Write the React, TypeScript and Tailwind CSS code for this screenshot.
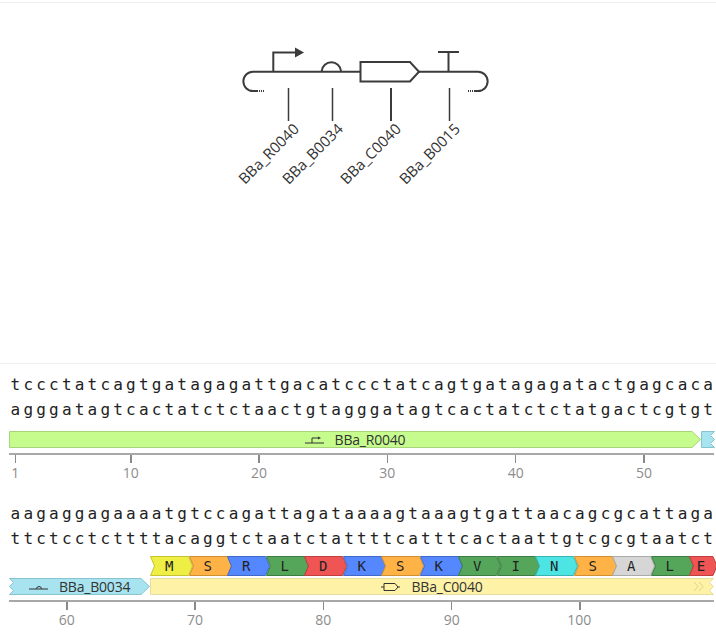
import React from "react";

const uiFont = "font-['Open_Sans',sans-serif]";

const aminoColors: Record<string, string> = {
  M: "#eeee44",
  S: "#ffb347",
  R: "#5588ff",
  L: "#55a65a",
  D: "#f05555",
  K: "#5588ff",
  V: "#55a65a",
  I: "#55a65a",
  N: "#4de4e4",
  A: "#d6d6d6",
  E: "#f05555",
};

const aminoBorders: Record<string, string> = {
  M: "#c4c430",
  S: "#d09030",
  R: "#4068c8",
  L: "#3d7d42",
  D: "#c04040",
  K: "#4068c8",
  V: "#3d7d42",
  I: "#3d7d42",
  N: "#38b4b4",
  A: "#aaaaaa",
  E: "#c04040",
};

function SeqLine({ text }: { text: string }) {
  return (
    <div className="flex h-[25px] items-center pl-[9px] font-['DejaVu_Sans_Mono',monospace] text-[16px] text-[#222]">
      {text.split("").map((c, i) => (
        <span key={i} className="w-[12.83px] shrink-0 text-center">
          {c}
        </span>
      ))}
    </div>
  );
}

function Tick({ label, wide }: { label: string; wide?: boolean }) {
  return (
    <div className={wide ? "w-[128.3px] shrink-0" : "w-[115.5px] shrink-0"}>
      <div className="h-2 w-[1.5px] bg-[#8a8a8a]" />
      <div className={label === "100" ? "flex w-[1.5px] justify-center pr-[5px] pt-[1px] text-[14px] leading-[18px] text-[#8c8c8c]" : "flex w-[1.5px] justify-center pt-[1px] text-[14px] leading-[18px] text-[#8c8c8c]"}>
        <span>{label}</span>
      </div>
    </div>
  );
}

function Axis({ first, labels }: { first: number; labels: string[] }) {
  return (
    <div className="mx-[9px] w-[705px] overflow-visible border-t-2 border-[#a8a8a8]" style={{ paddingLeft: first }}>
      <div className="flex">
        {labels.map((l, i) => (
          <Tick key={l} label={l} wide={first !== 5.5 || i > 0} />
        ))}
      </div>
    </div>
  );
}

function Amino({ letter, width = 38.5 }: { letter: string; width?: number }) {
  return (
    <div className="relative h-5 shrink-0" style={{ width }}>
      <svg className="absolute left-0 top-0 overflow-visible" width={width + 4} height="20">
        <polygon
          points={`0.5,0.5 ${width},0.5 ${width + 4},10 ${width},19.5 0.5,19.5 4.5,10`}
          fill={aminoColors[letter]}
          stroke={aminoBorders[letter]}
          strokeWidth="1"
        />
      </svg>
      <span className="absolute inset-0 flex items-center justify-center font-['DejaVu_Sans_Mono',monospace] text-[14px] text-[#222]">
        {letter}
      </span>
    </div>
  );
}

function PromoterGlyph() {
  return (
    <svg width="20" height="8" className="shrink-0">
      <path d="M0 7H19M7 7V2H14" fill="none" stroke="#333" strokeWidth="1" />
      <path d="M13 0.5L16 2L13 3.5Z" fill="#333" />
    </svg>
  );
}

function RbsGlyph() {
  return (
    <svg width="20" height="8" className="shrink-0">
      <path d="M0 6H19" stroke="#333" strokeWidth="1" />
      <path d="M7.5 6A2.5 2.5 0 0 1 12.5 6" fill="none" stroke="#333" strokeWidth="1" />
    </svg>
  );
}

function CdsGlyph() {
  return (
    <svg width="20" height="10" className="shrink-0">
      <path d="M0 5H3M16 5H19" stroke="#333" strokeWidth="1" />
      <path d="M3 1.5H14L17 5L14 8.5H3Z" fill="none" stroke="#333" strokeWidth="1" />
    </svg>
  );
}

function CircuitDiagram() {
  const labels = [
    { x: 300, y: 130, t: "BBa_R0040" },
    { x: 344, y: 130, t: "BBa_B0034" },
    { x: 402, y: 130, t: "BBa_C0040" },
    { x: 461, y: 130, t: "BBa_B0015" },
  ];
  return (
    <svg width="716" height="200" className="block">
      <g transform="translate(0 -3)">
        <g fill="none" stroke="#3b3b3b" strokeWidth="2">
          <path d="M263 71.7H253A9.65 9.65 0 0 0 253 91H257" />
          <path d="M257 91H264" strokeDasharray="1 1" />
          <path d="M263 71.7H360" />
          <path d="M273.3 71.7V52.5H296" />
          <path d="M321.7 71A9.7 9.7 0 0 1 341 71" />
          <path d="M360.5 62H410L419 71.7L410 81.5H360.5Z" />
          <path d="M419 71.7H478A9.65 9.65 0 0 1 478 91H474" />
          <path d="M468 91H474" strokeDasharray="1 1" />
          <path d="M448.5 71.7V52" />
          <path d="M438 52H459" />
          <path d="M288.5 88V121" strokeWidth="1.5" />
          <path d="M332.5 88V121" strokeWidth="1.5" />
          <path d="M391 88V121" />
          <path d="M449.5 88V121" strokeWidth="1.5" />
        </g>
        <path d="M295 47.5L304 52.5L295 57.5Z" fill="#3b3b3b" />
        {labels.map((l) => (
          <text
            key={l.t}
            x={l.x}
            y={l.y}
            textAnchor="end"
            transform={`rotate(-45 ${l.x} ${l.y})`}
            className={`${uiFont} text-[15px]`}
            fill="#333"
          >
            {l.t}
          </text>
        ))}
      </g>
    </svg>
  );
}

export default function App() {
  return (
    <div className={`h-[637px] w-[716px] overflow-hidden bg-white ${uiFont}`}>
      {/* Circuit map */}
      <div className="mt-[2px] h-[362px] border-y border-[#eceef2]">
        <CircuitDiagram />
      </div>

      {/* First sequence block */}
      <div className="pt-[8px]">
        <SeqLine text="tccctatcagtgatagagattgacatccctatcagtgatagagatactgagcaca" />
        <SeqLine text="agggatagtcactatctctaactgtagggatagtcactatctctatgactcgtgt" />
        <div className="mt-[9px] flex h-[17px] pl-[9px]">
          <div className="relative h-[17px] w-[692px] shrink-0">
            <svg className="absolute inset-0" width="692" height="17">
              <polygon points="0.5,0.5 683,0.5 691.5,8.5 683,16.5 0.5,16.5" fill="#c6fb8e" stroke="#a8d47a" />
            </svg>
            <div className="absolute inset-0 flex items-center justify-center gap-[10px] text-[14px] tracking-[-0.2px] text-[#333]">
              <PromoterGlyph />
              <span>BBa_R0040</span>
            </div>
          </div>
          <svg width="14" height="17" className="shrink-0">
            <polygon points="0.5,0.5 13.5,0.5 9.5,4.5 13.5,8.5 9.5,12.5 13.5,16.5 0.5,16.5" fill="#a8e4ef" stroke="#88c4d0" />
          </svg>
        </div>
        <div className="mt-[5px]">
          <Axis first={5.5} labels={["1", "10", "20", "30", "40", "50"]} />
        </div>
      </div>

      {/* Second sequence block */}
      <div className="pt-[19px]">
        <SeqLine text="aagaggagaaaatgtccagattagataaaagtaaagtgattaacagcgcattaga" />
        <SeqLine text="ttctcctcttttacaggtctaatctattttcatttcactaattgtcgcgtaatct" />
        <div className="mt-[5px] flex h-5 overflow-hidden pl-[150px]">
          {"MSRLDKSKVINSAL".split("").map((a, i) => (
            <Amino key={i} letter={a} />
          ))}
          <Amino letter="E" width={24} />
        </div>
        <div className="mt-[2px] flex h-[17px] pl-[9px]">
          <div className="relative h-[17px] w-[141px] shrink-0">
            <svg className="absolute inset-0" width="141" height="17">
              <polygon points="0.5,0.5 132,0.5 140.5,8.5 132,16.5 0.5,16.5 4.5,12.5 0.5,8.5 4.5,4.5" fill="#a8e4ef" stroke="#88c4d0" />
            </svg>
            <div className="absolute inset-0 flex items-center gap-[10px] pl-[20px] text-[14px] tracking-[-0.2px] text-[#333]">
              <RbsGlyph />
              <span>BBa_B0034</span>
            </div>
          </div>
          <div className="relative h-[17px] w-[564px] shrink-0">
            <svg className="absolute inset-0" width="564" height="17">
              <polygon points="0.5,0.5 563.5,0.5 559.5,4.5 563.5,8.5 559.5,12.5 563.5,16.5 0.5,16.5" fill="#fdf2a6" stroke="#e6dca0" />
              <path d="M544 4L548 8.5L544 13M549 4L553 8.5L549 13" fill="none" stroke="#e0d48c" strokeWidth="1" />
            </svg>
            <div className="absolute inset-0 flex items-center justify-center gap-[10px] text-[14px] tracking-[-0.2px] text-[#333]">
              <CdsGlyph />
              <span>BBa_C0040</span>
            </div>
          </div>
        </div>
        <div className="mt-[5px]">
          <Axis first={57} labels={["60", "70", "80", "90", "100"]} />
        </div>
      </div>
    </div>
  );
}
